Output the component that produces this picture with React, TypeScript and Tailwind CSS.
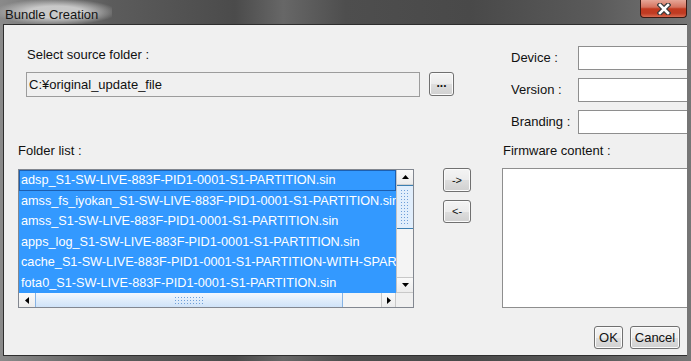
const files = [
  "adsp_S1-SW-LIVE-883F-PID1-0001-S1-PARTITION.sin",
  "amss_fs_iyokan_S1-SW-LIVE-883F-PID1-0001-S1-PARTITION.sin",
  "amss_S1-SW-LIVE-883F-PID1-0001-S1-PARTITION.sin",
  "apps_log_S1-SW-LIVE-883F-PID1-0001-S1-PARTITION.sin",
  "cache_S1-SW-LIVE-883F-PID1-0001-S1-PARTITION-WITH-SPARE.sin",
  "fota0_S1-SW-LIVE-883F-PID1-0001-S1-PARTITION.sin",
];

const btn =
  "flex items-center justify-center rounded-[3px] border border-[#707070] bg-[linear-gradient(#f4f4f4_0%,#ececec_50%,#dedede_51%,#d0d0d0_100%)] shadow-[inset_0_0_0_1px_#fbfbfb] text-[#111]";

const arrowBox = "flex items-center justify-center bg-[linear-gradient(#fafafa,#ececec)]";

function Tri({ dir }: { dir: "up" | "down" | "left" | "right" }) {
  const pts = {
    up: "0,4 7,4 3.5,0",
    down: "0,0 7,0 3.5,4",
    left: "4,0 4,7 0,3.5",
    right: "0,0 0,7 4,3.5",
  }[dir];
  const vertical = dir === "up" || dir === "down";
  return (
    <svg width={vertical ? 7 : 4} height={vertical ? 4 : 7}>
      <polygon points={pts} fill="#000" />
    </svg>
  );
}

function Field({ label }: { label: string }) {
  return (
    <div className="flex items-center h-[24px]">
      <span className="w-[67px] text-[13px] text-[#111]">{label}</span>
      <div className="w-[130px] h-[24px] shrink-0 bg-white border border-[#8e8e8e]" />
    </div>
  );
}

export default function App() {
  return (
    <div className="w-[691px] h-[361px] overflow-hidden flex flex-col font-['Liberation_Sans',Arial,sans-serif] bg-[linear-gradient(90deg,#8a8a8a_0%,#5c5c5c_16%,#4b4b4b_34%,#676767_41%,#4e4e4e_50%,#494949_68%,#5a5a5a_86%,#767676_100%)]">
      {/* title bar */}
      <div className="h-[24px] shrink-0 flex items-start justify-between">
        <div className="h-[24px] pl-[5px] pr-[14px] pt-[2px] bg-[radial-gradient(ellipse_at_center,rgba(205,205,205,0.95)_35%,rgba(160,160,160,0)_78%)]">
          <span className="text-[13px] leading-[16px] text-[#151515]">Bundle Creation</span>
        </div>
        <div className="mr-[4px] w-[47px] h-[18px] rounded-b-[4px] border border-t-0 border-[#3a1a14] bg-[linear-gradient(#e6a697_0%,#d5735f_42%,#c33a20_52%,#bf3a22_78%,#d96a50_100%)] flex items-center justify-center">
          <svg width="14" height="12" viewBox="0 0 14 12">
            <path d="M3 2 L11 10 M11 2 L3 10" stroke="#3a3a3a" strokeWidth="5" strokeLinecap="square" />
            <path d="M3 2 L11 10 M11 2 L3 10" stroke="#fff" strokeWidth="2.6" strokeLinecap="square" />
          </svg>
        </div>
      </div>

      {/* client area */}
      <div className="flex-1 ml-[3px] mr-[4px] mb-[5px] border border-r-0 border-[#2e2e2e] bg-[#f0f0f0] overflow-hidden text-[13px] text-[#111]">
        {/* top */}
        <div className="flex h-[116px]">
          <div className="w-[507px] shrink-0 pl-[22px] pt-[22px]">
            <div className="pl-[1px] leading-[16px]">Select source folder :</div>
            <div className="flex mt-[9px]">
              <div className="w-[394px] h-[25px] border border-[#9c9c9c] bg-[#f0f0f0] pl-[2px] flex items-center">
                C:¥original_update_file
              </div>
              <div className={`${btn} ml-[9px] w-[25px] h-[24px] text-[12px] font-bold leading-none pb-[3px]`}>...</div>
            </div>
          </div>
          <div className="flex flex-col pt-[21px] gap-[8px]">
            <Field label="Device :" />
            <Field label="Version :" />
            <Field label="Branding :" />
          </div>
        </div>

        {/* middle */}
        <div className="flex">
          <div className="pl-[14px] pt-[2px]">
            <div className="leading-[16px]">Folder list :</div>
            <div className="mt-[10px] w-[396px] h-[139px] border border-[#828790] bg-white flex flex-col">
              <div className="flex h-[123px]">
                <div className="w-[377px] overflow-hidden bg-[#3399ff] text-white text-[12.7px]">
                  {files.map((f, i) => (
                    <div
                      key={f}
                      className={`h-[20.5px] leading-[18px] pl-[1px] whitespace-nowrap ${i === 0 ? "border border-[#1c5fb0]" : "border border-transparent"}`}
                    >
                      {f}
                    </div>
                  ))}
                </div>
                <div className="w-[17px] flex flex-col border-l border-[#c4c4c4] bg-[#f0f0f0]">
                  <div className={`${arrowBox} h-[15px] border-b border-[#d0d0d0]`}>
                    <Tri dir="up" />
                  </div>
                  <div className="h-[44px] border-y border-[#3c7fb1] bg-[#e1eefc] p-[3px]">
                    <div className="w-full h-full bg-[radial-gradient(circle,#6f9fd8_0.8px,transparent_1px)] bg-[length:3px_3px]" />
                  </div>
                  <div className="flex-1 bg-[#f4f4f4]" />
                  <div className={`${arrowBox} h-[16px] border-y border-[#c8c8c8]`}>
                    <Tri dir="down" />
                  </div>
                </div>
              </div>
              <div className="flex h-[14px]">
                <div className={`${arrowBox} w-[16px]`}>
                  <Tri dir="left" />
                </div>
                <div className="w-[308px] border-x border-[#86b3e4] bg-[linear-gradient(#f3f8fe,#cfe3f8)] flex items-center justify-center">
                  <div className="w-[30px] h-[8px] bg-[radial-gradient(circle,#6f9fd8_0.8px,transparent_1px)] bg-[length:3px_3px]" />
                </div>
                <div className="flex-1 bg-[#f4f4f4]" />
                <div className={`${arrowBox} w-[15px] border-x border-[#c8c8c8]`}>
                  <Tri dir="right" />
                </div>
                <div className="w-[17px] bg-[#f0f0f0]" />
              </div>
            </div>
          </div>

          <div className="ml-[29px] pt-[27px] flex flex-col gap-[8px]">
            <div className={`${btn} w-[28px] h-[24px] text-[11px]`}>-&gt;</div>
            <div className={`${btn} w-[28px] h-[23px] text-[11px]`}>&lt;-</div>
          </div>

          <div className="ml-[31px] pt-[2px]">
            <div className="pl-[1px] leading-[16px]">Firmware content :</div>
            <div className="mt-[9px] w-[200px] h-[140px] bg-white border border-[#8e8e8e]" />
          </div>
        </div>

        {/* bottom */}
        <div className="flex justify-end gap-[7px] pr-[7px] mt-[18px]">
          <div className={`${btn} w-[29px] h-[23px] border-[#5a5a5a] shadow-[inset_0_0_0_1px_#9a9a9a]`}>OK</div>
          <div className={`${btn} w-[50px] h-[23px]`}>Cancel</div>
        </div>
      </div>
    </div>
  );
}
